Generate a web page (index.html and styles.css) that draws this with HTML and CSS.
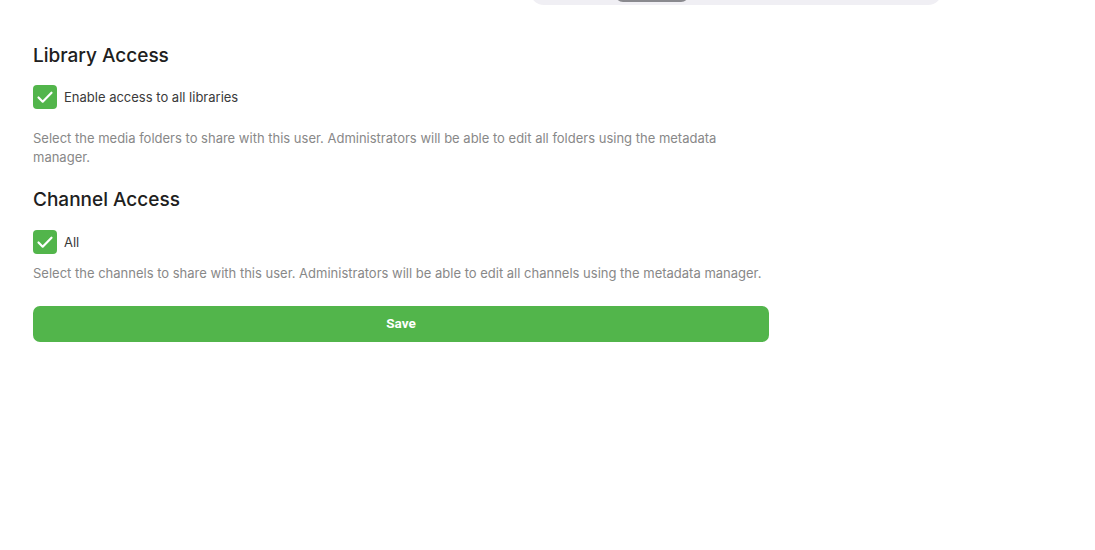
FILE: index.html
```html
<!DOCTYPE html>
<html>
<head>
<meta charset="utf-8">
<link rel="stylesheet" href="styles.css">
</head>
<body>
<div class="page">
  <div class="tabs-wrap">
    <div class="tabs"><div class="tab-thumb"></div></div>
  </div>
  <form class="form">
    <h2 class="heading">Library Access</h2>
    <label class="check">
      <span class="box"><svg viewBox="0 0 24 24" width="24" height="24"><path d="M5.5 12.5l4.2 4.2 8.8-9" fill="none" stroke="#fff" stroke-width="2.2" stroke-linecap="round" stroke-linejoin="round"/></svg></span>
      <span class="check-label">Enable access to all libraries</span>
    </label>
    <p class="desc desc-lib">Select the media folders to share with this user. Administrators will be able to edit all folders using the metadata manager.</p>
    <h2 class="heading heading-ch">Channel Access</h2>
    <label class="check">
      <span class="box"><svg viewBox="0 0 24 24" width="24" height="24"><path d="M5.5 12.5l4.2 4.2 8.8-9" fill="none" stroke="#fff" stroke-width="2.2" stroke-linecap="round" stroke-linejoin="round"/></svg></span>
      <span class="check-label">All</span>
    </label>
    <p class="desc desc-ch">Select the channels to share with this user. Administrators will be able to edit all channels using the metadata manager.</p>
    <button type="button" class="save">Save</button>
  </form>
</div>
</body>
</html>
```

FILE: styles.css
```css
html, body {
  margin: 0;
  padding: 0;
  background: #fff;
}
body {
  font-family: Inter, "Noto Sans", sans-serif;
  color: #222;
}
.page {
  padding: 0 33px;
}
.tabs-wrap {
  display: flex;
  padding-left: 497px;
  height: 5px;
  overflow: hidden;
}
.tabs {
  width: 412px;
  height: 40px;
  margin-top: -35px;
  background: #f0eff4;
  border-radius: 14px;
  display: flex;
  align-items: flex-end;
  padding: 0 0 3px 85px;
  box-sizing: border-box;
}
.tab-thumb {
  width: 74px;
  height: 30px;
  background: #8a8a8f;
  border-radius: 8px;
}
.form {
  width: 736px;
  display: flex;
  flex-direction: column;
  align-items: flex-start;
}
.heading {
  margin: 39px 0 0;
  font-size: 19px;
  font-weight: 500;
  line-height: 24px;
  color: #202020;
}
.heading-ch {
  margin-top: 21px;
}
.check {
  display: flex;
  align-items: center;
  gap: 7px;
  margin-top: 17px;
}
.heading-ch + .check {
  margin-top: 18px;
}
.box {
  width: 24px;
  height: 24px;
  border-radius: 4px;
  background: #52b54b;
  display: flex;
}
.check-label {
  font-size: 13px;
  color: #3a3a3a;
}
.desc {
  margin: 0;
  font-size: 13px;
  line-height: 19px;
  color: #888;
}
.desc-lib {
  margin-top: 20px;
}
.desc-ch {
  margin-top: 10px;
}
.save {
  margin-top: 23px;
  width: 736px;
  height: 36px;
  border: 0;
  border-radius: 7px;
  background: #52b54b;
  color: #fff;
  font-family: Roboto, Inter, sans-serif;
  font-weight: 700;
  font-size: 13.5px;
  line-height: 34px;
  padding: 0 0 2px;
  cursor: pointer;
}
```
